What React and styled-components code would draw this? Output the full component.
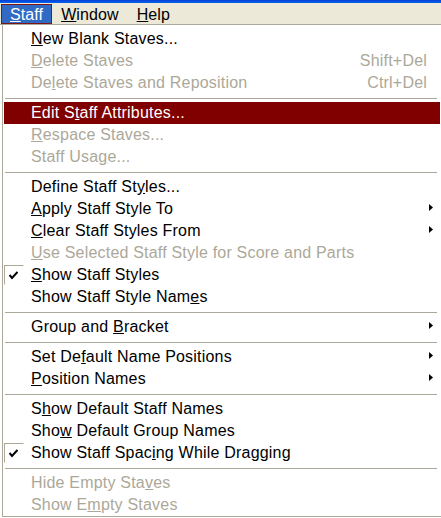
import React from "react";
import styled, { createGlobalStyle } from "styled-components";

const Global = createGlobalStyle`
  html, body { margin: 0; padding: 0; background: #ffffff; }
  body { font-family: "Liberation Sans", Arial, sans-serif; font-size: 16px; }
  #root { width: 441px; height: 518px; overflow: hidden; }
`;

const Frame = styled.div`
  width: 441px;
  height: 518px;
  display: flex;
  flex-direction: column;
  background: #ffffff;
`;

const TitleStrip = styled.div`
  height: 3px;
  background: linear-gradient(#0a3fd0, #0063f4);
`;

const MenuBar = styled.div`
  display: flex;
  align-items: flex-start;
  height: 20px;
  padding: 1px 0 0 1px;
  background: #ece9d8;
  border-bottom: 1px solid #aca899;
`;

const BarItem = styled.div`
  height: 18px;
  padding: 0 8px;
  line-height: 19px;
  border: 1px solid ${(p) => (p.$open ? "#7f1414" : "transparent")};
  background: ${(p) => (p.$open ? "#316ac5" : "transparent")};
  color: ${(p) => (p.$open ? "#ffffff" : "#000000")};
  white-space: nowrap;
  letter-spacing: 0.1px;
`;

const Menu = styled.div`
  flex: 1;
  margin-left: 2px;
  padding: 3px 0 0 1px;
  border-left: 1px solid #aca899;
  border-bottom: 1px solid #aca899;
  display: flex;
  flex-direction: column;
  margin-bottom: 1px;
`;

const Row = styled.div`
  display: grid;
  grid-template-columns: 27px 1fr auto 13px;
  align-items: center;
  height: 22px;
  width: 436px;
  background: ${(p) => (p.$hot ? "#800000" : "transparent")};
  color: ${(p) => (p.$hot ? "#ffffff" : p.$disabled ? "#aca899" : "#000000")};
  white-space: nowrap;
  letter-spacing: 0.2px;
`;

const CheckCell = styled.div`
  height: 22px;
  display: flex;
  align-items: center;
`;

const CheckBox = styled.div`
  width: 20px;
  height: 20px;
  box-sizing: border-box;
  border-top: 1px solid #aca899;
  border-left: 1px solid #aca899;
  border-right: 1px solid #ffffff;
  border-bottom: 1px solid #ffffff;
  display: flex;
  align-items: center;
  justify-content: center;
  padding: 0 2px 0 0;
`;

const Label = styled.span`
  line-height: 22px;
`;

const Key = styled.span`
  text-decoration: underline;
  text-underline-offset: 1px;
`;

const Shortcut = styled.span`
  line-height: 22px;
  text-align: right;
`;

const ArrowCell = styled.div`
  display: flex;
  align-items: center;
  padding: 0 0 3px 2px;
`;

const Separator = styled.div`
  height: 8px;
  width: 436px;
  display: flex;
  align-items: center;
  padding: 0 3px 0 1px;
  box-sizing: border-box;
  &::after {
    content: "";
    flex: 1;
    height: 1px;
    background: #aca899;
    margin-top: 1px;
  }
`;

const Check = () => (
  <svg width="9" height="9" viewBox="0 0 9 9">
    <path d="M0.5 4 L3 7 L8.5 1" fill="none" stroke="#000" strokeWidth="2" />
  </svg>
);

const Arrow = () => (
  <svg width="4" height="7" viewBox="0 0 4 7">
    <path d="M0 0 L4 3.5 L0 7 Z" fill="#000" />
  </svg>
);

const withKey = (text, idx) =>
  idx == null ? (
    text
  ) : (
    <>
      {text.slice(0, idx)}
      <Key>{text[idx]}</Key>
      {text.slice(idx + 1)}
    </>
  );

const items = [
  { t: "New Blank Staves...", k: 0 },
  { t: "Delete Staves", k: 0, d: true, s: "Shift+Del" },
  { t: "Delete Staves and Reposition", k: 2, d: true, s: "Ctrl+Del" },
  "sep",
  { t: "Edit Staff Attributes...", k: 6, hot: true },
  { t: "Respace Staves...", k: 0, d: true },
  { t: "Staff Usage...", k: 9, d: true },
  "sep",
  { t: "Define Staff Styles...", k: 15 },
  { t: "Apply Staff Style To", k: 0, sub: true },
  { t: "Clear Staff Styles From", k: 0, sub: true },
  { t: "Use Selected Staff Style for Score and Parts", k: 0, d: true },
  { t: "Show Staff Styles", k: 0, c: true },
  { t: "Show Staff Style Names", k: 20 },
  "sep",
  { t: "Group and Bracket", k: 10, sub: true },
  "sep",
  { t: "Set Default Name Positions", k: 6, sub: true },
  { t: "Position Names", k: 0, sub: true },
  "sep",
  { t: "Show Default Staff Names", k: 1 },
  { t: "Show Default Group Names", k: 3 },
  { t: "Show Staff Spacing While Dragging", k: 15, c: true },
  "sep",
  { t: "Hide Empty Staves", k: 14, d: true },
  { t: "Show Empty Staves", k: 6, d: true },
];

export default function App() {
  return (
    <Frame>
      <Global />
      <TitleStrip />
      <MenuBar>
        <BarItem $open>{withKey("Staff", 0)}</BarItem>
        <BarItem>{withKey("Window", 0)}</BarItem>
        <BarItem>{withKey("Help", 0)}</BarItem>
      </MenuBar>
      <Menu>
        {items.map((it, i) =>
          it === "sep" ? (
            <Separator key={i} />
          ) : (
            <Row key={i} $hot={it.hot} $disabled={it.d}>
              <CheckCell>
                {it.c && (
                  <CheckBox>
                    <Check />
                  </CheckBox>
                )}
              </CheckCell>
              <Label>{withKey(it.t, it.k)}</Label>
              <Shortcut>{it.s || ""}</Shortcut>
              <ArrowCell>{it.sub && <Arrow />}</ArrowCell>
            </Row>
          )
        )}
      </Menu>
    </Frame>
  );
}
